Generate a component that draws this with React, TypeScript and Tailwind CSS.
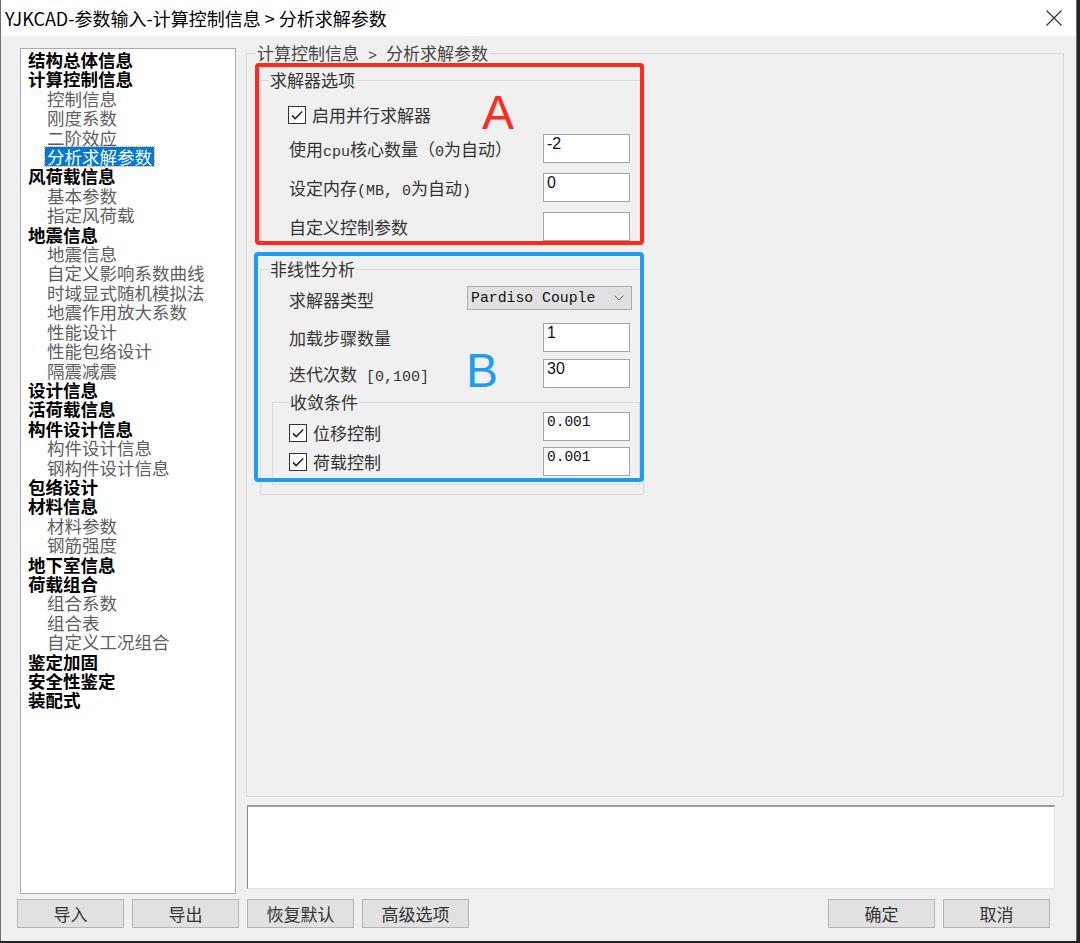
import { ChevronDown } from "lucide-react";

type TreeItem = { label: string; bold?: boolean; selected?: boolean };

const TREE: TreeItem[] = [
  { label: "结构总体信息", bold: true },
  { label: "计算控制信息", bold: true },
  { label: "控制信息" },
  { label: "刚度系数" },
  { label: "二阶效应" },
  { label: "分析求解参数", selected: true },
  { label: "风荷载信息", bold: true },
  { label: "基本参数" },
  { label: "指定风荷载" },
  { label: "地震信息", bold: true },
  { label: "地震信息" },
  { label: "自定义影响系数曲线" },
  { label: "时域显式随机模拟法" },
  { label: "地震作用放大系数" },
  { label: "性能设计" },
  { label: "性能包络设计" },
  { label: "隔震减震" },
  { label: "设计信息", bold: true },
  { label: "活荷载信息", bold: true },
  { label: "构件设计信息", bold: true },
  { label: "构件设计信息" },
  { label: "钢构件设计信息" },
  { label: "包络设计", bold: true },
  { label: "材料信息", bold: true },
  { label: "材料参数" },
  { label: "钢筋强度" },
  { label: "地下室信息", bold: true },
  { label: "荷载组合", bold: true },
  { label: "组合系数" },
  { label: "组合表" },
  { label: "自定义工况组合" },
  { label: "鉴定加固", bold: true },
  { label: "安全性鉴定", bold: true },
  { label: "装配式", bold: true },
];

// SimSun-style label: half-width ASCII runs get a monospace face so widths line up
function Label({ text }: { text: string }) {
  const parts = text.split(/([\x20-\x7e]+)/).filter(Boolean);
  return (
    <span className="whitespace-pre">
      {parts.map((p, i) =>
        /^[\x20-\x7e]+$/.test(p) ? (
          <span key={i} className="font-['Liberation_Mono'] text-[15px] leading-[0]">
            {p}
          </span>
        ) : (
          <span key={i}>{p}</span>
        )
      )}
    </span>
  );
}

function CheckBox() {
  return (
    <span className="flex h-[18px] w-[18px] shrink-0 items-center justify-center border border-[#333] bg-white">
      <svg width="14" height="14" viewBox="0 0 14 14" fill="none">
        <path d="M2 7.4 5.2 10.6 12.2 3.4" stroke="#222" strokeWidth="1.5" />
      </svg>
    </span>
  );
}

function TextBox({ value, mono }: { value: string; mono?: boolean }) {
  return (
    <input
      readOnly
      value={value}
      className={
        mono
          ? "h-[29px] w-[87px] border border-[#a3a3a3] bg-white px-[3px] pb-[9px] pt-0 font-['Liberation_Mono'] text-[14.5px] text-[#111] outline-none"
          : "h-[29px] w-[87px] border border-[#a3a3a3] bg-white px-[3px] pb-[9px] pt-0 font-['Liberation_Sans'] text-[16px] text-[#111] outline-none"
      }
    />
  );
}

function Button({ label }: { label: string }) {
  return (
    <button
      type="button"
      className="h-[29px] w-[107px] border border-[#b4b4b4] bg-[#e1e1e1] text-[17px] text-[#333]"
    >
      {label}
    </button>
  );
}

export default function App() {
  return (
    <div className="h-[943px] w-[1080px] overflow-hidden bg-[#232323] font-['Noto_Sans_CJK_SC',sans-serif] [text-spacing-trim:space-all]">
      <div className="relative flex h-[941px] w-[1077px] flex-col border-x border-[#6e6e6e] bg-[#f0f0f0]">
        {/* title bar */}
        <div className="flex h-[36px] shrink-0 items-center justify-between bg-white pl-[4px] pr-[14px]">
          <span className="text-[18px] text-black">YJKCAD-参数输入-计算控制信息 &gt; 分析求解参数</span>
          <svg width="16" height="16" viewBox="0 0 16 16">
            <path d="M0.5 0.5 15.5 15.5 M15.5 0.5 0.5 15.5" stroke="#333" strokeWidth="1.2" />
          </svg>
        </div>

        <div className="flex pl-[19px] pt-[7px]">
          {/* tree */}
          <div className="mt-[5px] h-[846px] w-[216px] border border-[#ababab] bg-white pt-[1px] text-[17.5px] leading-[19.4px]">
            {TREE.map((it, i) => (
              <div key={i} className={it.bold ? "pl-[5px] font-bold text-black" : "pl-[24px] text-[#5e5e5e]"}>
                <span
                  className={
                    it.selected
                      ? "inline-block h-[19.4px] bg-[#0078d7] px-[2px] text-white outline-1 outline-dotted outline-[#e8a33a]"
                      : "inline-block px-[2px]"
                  }
                >
                  {it.label}
                </span>
              </div>
            ))}
          </div>

          {/* right column */}
          <div className="ml-[10px] flex w-[818px] flex-col text-[17px] text-[#333]">
            <fieldset className="h-[754px] border border-[#d9d9d9]">
              <legend className="ml-[9px] h-[20px] px-[1px] leading-[20px] text-[#444]">
                <Label text="计算控制信息 > 分析求解参数" />
              </legend>

              <fieldset className="ml-[13px] mt-[7px] w-[384px] border border-[#d9d9d9] pb-[3px]">
                <legend className="ml-[8px] px-[1px] leading-[20px]">求解器选项</legend>
                <div className="mt-[15px] flex h-[20px] items-center gap-[6px] pl-[27px]">
                  <CheckBox />
                  <span>启用并行求解器</span>
                </div>
                <div className="mt-[9px] flex h-[29px] items-center justify-between pl-[28px] pr-[13px]">
                  <Label text="使用cpu核心数量（0为自动）" />
                  <TextBox value="-2" />
                </div>
                <div className="mt-[10px] flex h-[29px] items-center justify-between pl-[28px] pr-[13px]">
                  <Label text="设定内存(MB, 0为自动)" />
                  <TextBox value="0" />
                </div>
                <div className="mt-[10px] flex h-[29px] items-center justify-between pl-[28px] pr-[13px]">
                  <span>自定义控制参数</span>
                  <TextBox value="" />
                </div>
              </fieldset>

              <fieldset className="ml-[13px] mt-[14px] w-[384px] border border-[#d9d9d9] pb-[9px]">
                <legend className="ml-[8px] px-[1px] leading-[20px]">非线性分析</legend>
                <div className="mt-[7px] flex h-[24px] items-center justify-between pl-[28px] pr-[11px]">
                  <span className="mt-[3px]">求解器类型</span>
                  <div className="flex h-[24px] w-[165px] items-center justify-between border border-[#adadad] bg-[#e1e1e1] pl-[3px] pr-[4px]">
                    <span className="font-['Liberation_Mono'] text-[14.8px] text-[#111]">Pardiso Couple</span>
                    <ChevronDown size={16} strokeWidth={1.3} className="text-[#444]" />
                  </div>
                </div>
                <div className="mt-[13px] flex h-[29px] items-center justify-between pl-[28px] pr-[13px]">
                  <span>加载步骤数量</span>
                  <TextBox value="1" />
                </div>
                <div className="mt-[7px] flex h-[29px] items-center justify-between pl-[28px] pr-[13px]">
                  <Label text="迭代次数 [0,100]" />
                  <TextBox value="30" />
                </div>

                <fieldset className="ml-[11px] mt-[4px] w-[368px] border border-[#d9d9d9] pb-[8px]">
                  <legend className="ml-[16px] px-[1px] leading-[20px]">收敛条件</legend>
                  <div className="flex h-[29px] items-start justify-between pl-[16px] pr-[9px]">
                    <div className="mt-[12px] flex h-[18px] items-center gap-[6px]">
                      <CheckBox />
                      <span>位移控制</span>
                    </div>
                    <TextBox value="0.001" mono />
                  </div>
                  <div className="mt-[6px] flex h-[29px] items-start justify-between pl-[16px] pr-[9px]">
                    <div className="mt-[6px] flex h-[18px] items-center gap-[6px]">
                      <CheckBox />
                      <span>荷载控制</span>
                    </div>
                    <TextBox value="0.001" mono />
                  </div>
                </fieldset>
              </fieldset>
            </fieldset>

            <div className="ml-[1px] mt-[8px] h-[84px] w-[808px] border border-[#e3e3e3] border-l-[#8c8c8c] border-t-2 border-t-[#9a9a9a] bg-white" />
          </div>
        </div>

        {/* buttons */}
        <div className="mt-[5px] flex justify-between pl-[16px] pr-[26px]">
          <div className="flex gap-[8px]">
            <Button label="导入" />
            <Button label="导出" />
            <Button label="恢复默认" />
            <Button label="高级选项" />
          </div>
          <div className="flex gap-[8px]">
            <Button label="确定" />
            <Button label="取消" />
          </div>
        </div>

        {/* annotations */}
        <div className="absolute left-[254px] top-[63px] h-[182px] w-[389px] rounded-[4px] border-4 border-[#ff2a1f]" />
        <div className="absolute left-[481px] top-[89px] h-[48px] font-['Liberation_Sans'] text-[48px] leading-[48px] text-[#ff2a1f]">A</div>
        <div className="absolute left-[253px] top-[252px] h-[230px] w-[390px] rounded-[4px] border-4 border-[#1f9bf0]" />
        <div className="absolute left-[465px] top-[347px] h-[48px] font-['Liberation_Sans'] text-[48px] leading-[48px] text-[#1f9bf0]">B</div>
      </div>
    </div>
  );
}
